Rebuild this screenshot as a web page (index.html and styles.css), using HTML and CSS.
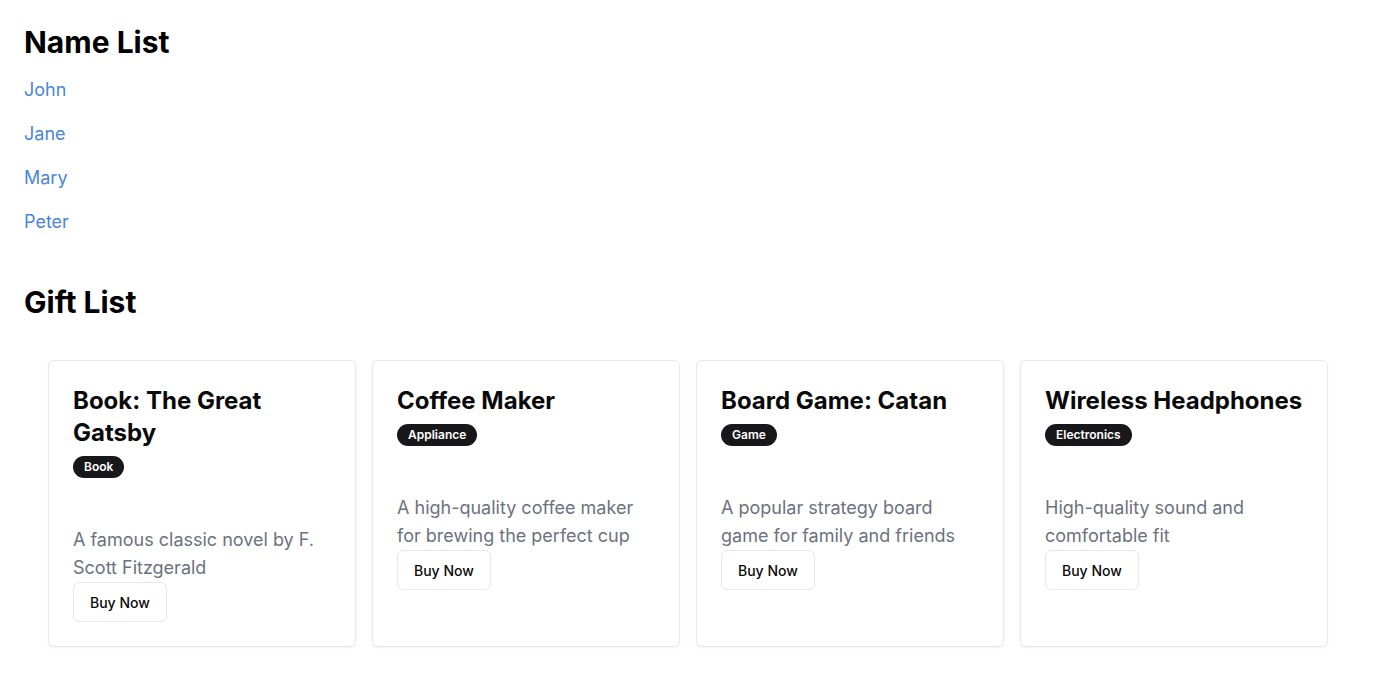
FILE: index.html
```html
<!DOCTYPE html>
<html lang="en">
<head>
<meta charset="utf-8">
<title>Lists</title>
<link rel="stylesheet" href="styles.css">
</head>
<body>
<main class="page">
  <section class="names">
    <h1 class="heading">Name List</h1>
    <ul class="name-list">
      <li><a class="name-link" href="#">John</a></li>
      <li><a class="name-link" href="#">Jane</a></li>
      <li><a class="name-link" href="#">Mary</a></li>
      <li><a class="name-link" href="#">Peter</a></li>
    </ul>
  </section>
  <section class="gifts">
    <h2 class="heading">Gift List</h2>
    <div class="gift-grid">
      <div class="card">
        <div class="card-header">
          <h3 class="card-title">Book: The Great Gatsby</h3>
          <div><span class="badge">Book</span></div>
        </div>
        <div class="card-content">
          <p class="desc">A famous classic novel by F. Scott Fitzgerald</p>
          <button class="btn">Buy Now</button>
        </div>
      </div>
      <div class="card">
        <div class="card-header">
          <h3 class="card-title">Coffee Maker</h3>
          <div><span class="badge">Appliance</span></div>
        </div>
        <div class="card-content">
          <p class="desc">A high-quality coffee maker for brewing the perfect cup</p>
          <button class="btn">Buy Now</button>
        </div>
      </div>
      <div class="card">
        <div class="card-header">
          <h3 class="card-title">Board Game: Catan</h3>
          <div><span class="badge">Game</span></div>
        </div>
        <div class="card-content">
          <p class="desc">A popular strategy board game for family and friends</p>
          <button class="btn">Buy Now</button>
        </div>
      </div>
      <div class="card">
        <div class="card-header">
          <h3 class="card-title">Wireless Headphones</h3>
          <div><span class="badge">Electronics</span></div>
        </div>
        <div class="card-content">
          <p class="desc">High-quality sound and comfortable fit</p>
          <button class="btn">Buy Now</button>
        </div>
      </div>
    </div>
  </section>
</main>
</body>
</html>
```
FILE: styles.css
```css
* { box-sizing: border-box; }
html, body { margin: 0; padding: 0; background: #fff; }
body {
  font-family: Inter, "Noto Sans", sans-serif;
  color: #0a0a0a;
}
.page {
  padding: 24px;
  display: flex;
  flex-direction: column;
  gap: 48px;
}
.heading {
  margin: 0 0 16px;
  font-size: 30px;
  line-height: 36px;
  font-weight: 700;
  color: #000;
}
.name-list {
  list-style: none;
  margin: 0;
  padding: 0;
  display: flex;
  flex-direction: column;
  gap: 16px;
}
.name-list li { font-size: 18px; line-height: 28px; }
.name-link {
  color: #4a85da;
  text-decoration: none;
}
.gift-grid {
  display: grid;
  grid-template-columns: repeat(4, 1fr);
  gap: 16px;
  padding: 24px;
}
.card {
  border: 1px solid #e5e7eb;
  border-radius: 6px;
  background: #fff;
  box-shadow: 0 1px 2px rgba(0,0,0,0.05);
  display: flex;
  flex-direction: column;
}
.card-header {
  padding: 24px 24px 0;
  display: flex;
  flex-direction: column;
  gap: 6px;
}
.card-title {
  margin: 0;
  font-size: 24px;
  line-height: 32px;
  font-weight: 700;
}
.badge {
  display: inline-flex;
  align-items: center;
  border: 1px solid transparent;
  border-radius: 9999px;
  padding: 2px 10px;
  font-size: 12px;
  line-height: 16px;
  font-weight: 600;
  background: #18181b;
  color: #fff;
}
.card-content {
  padding: 48px 24px 24px;
}
.desc {
  margin: 0;
  font-size: 18px;
  line-height: 28px;
  color: #6b7280;
}
.btn {
  display: block;
  height: 40px;
  padding: 8px 16px;
  border: 1px solid #e5e7eb;
  border-radius: 6px;
  background: #fff;
  font-family: inherit;
  font-size: 14px;
  font-weight: 500;
  color: #0a0a0a;
  cursor: pointer;
}
```
